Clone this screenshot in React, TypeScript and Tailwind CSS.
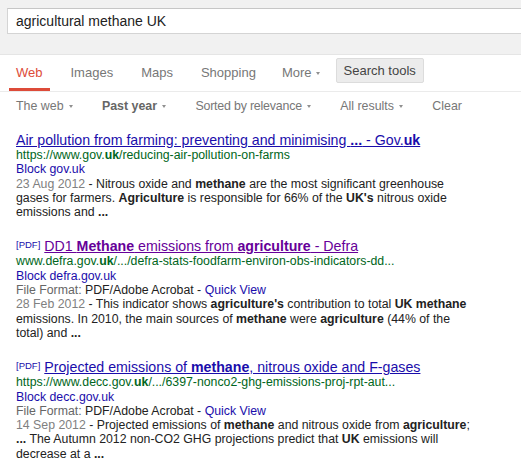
import React from "react";

const Arrow = ({ ml = "ml-[5px]" }: { ml?: string }) => (
  <span className={`${ml} inline-block h-0 w-0 border-l-[2.5px] border-r-[2.5px] border-t-[3px] border-l-transparent border-r-transparent border-t-[#909090] align-middle`} />
);

const B = ({ children }: { children: React.ReactNode }) => <b className="font-bold">{children}</b>;

type Result = {
  pdf?: boolean;
  visited?: boolean;
  title: React.ReactNode;
  url: React.ReactNode;
  block: string;
  format?: boolean;
  date: string;
  lines: React.ReactNode[];
};

const results: Result[] = [
  {
    title: (
      <>
        Air pollution from farming: preventing and minimising <B>...</B> - Gov.<B>uk</B>
      </>
    ),
    url: (
      <>
        https://www.gov.<B>uk</B>/reducing-air-pollution-on-farms
      </>
    ),
    block: "Block gov.uk",
    date: "23 Aug 2012",
    lines: [
      <>
        {" "}- Nitrous oxide and <B>methane</B> are the most significant greenhouse
      </>,
      <>
        gases for farmers. <B>Agriculture</B> is responsible for 66% of the <B>UK's</B> nitrous oxide
      </>,
      <>
        emissions and <B>...</B>
      </>,
    ],
  },
  {
    pdf: true,
    visited: true,
    title: (
      <>
        DD1 <B>Methane</B> emissions from <B>agriculture</B> - Defra
      </>
    ),
    url: (
      <>
        www.defra.gov.<B>uk</B>/.../defra-stats-foodfarm-environ-obs-indicators-dd...
      </>
    ),
    block: "Block defra.gov.uk",
    format: true,
    date: "28 Feb 2012",
    lines: [
      <>
        {" "}- This indicator shows <B>agriculture's</B> contribution to total <B>UK methane</B>
      </>,
      <>
        emissions. In 2010, the main sources of <B>methane</B> were <B>agriculture</B> (44% of the
      </>,
      <>
        total) and <B>...</B>
      </>,
    ],
  },
  {
    pdf: true,
    title: (
      <>
        Projected emissions of <B>methane</B>, nitrous oxide and F-gases
      </>
    ),
    url: (
      <>
        https://www.decc.gov.<B>uk</B>/.../6397-nonco2-ghg-emissions-proj-rpt-aut...
      </>
    ),
    block: "Block decc.gov.uk",
    format: true,
    date: "14 Sep 2012",
    lines: [
      <>
        {" "}- Projected emissions of <B>methane</B> and nitrous oxide from <B>agriculture</B>;
      </>,
      <>
        <B>...</B> The Autumn 2012 non-CO2 GHG projections predict that <B>UK</B> emissions will
      </>,
      <>
        decrease at a <B>...</B>
      </>,
    ],
  },
];

export default function App() {
  return (
    <div className="h-[471px] w-[521px] overflow-hidden bg-white font-['Liberation_Sans',Arial,sans-serif]">
      {/* header */}
      <div className="h-[55px] overflow-hidden border-b border-[#e5e5e5] bg-[#f1f1f1] pl-[7px] pt-[8px]">
        <div className="flex h-[26px] w-[600px] items-center border border-[#d4d4d4] border-t-[#c6c6c6] bg-white pl-[8px] text-[14px] text-[#222]">
          agricultural methane UK
        </div>
      </div>

      {/* tabs */}
      <div className="flex h-[37px] items-stretch gap-[14px] border-b border-[#ebebeb] pl-[9px] text-[13px] text-[#777]">
        <div className="flex h-[36px] items-center border-b-[3px] border-[#dd4b39] px-[7px] pt-[3px] text-[#dd4b39]">Web</div>
        <div className="flex h-[36px] items-center border-b-[3px] border-transparent px-[7px] pt-[3px]">Images</div>
        <div className="flex h-[36px] items-center border-b-[3px] border-transparent px-[7px] pt-[3px]">Maps</div>
        <div className="flex h-[36px] items-center border-b-[3px] border-transparent px-[7px] pt-[3px]">Shopping</div>
        <div className="-ml-[2px] flex h-[36px] items-center border-b-[3px] border-transparent pl-[7px] pr-0 pt-[3px]">
          More
          <Arrow ml="ml-[4px]" />
        </div>
        <div className="ml-[2px] flex items-start pt-[3px]">
          <div className="flex h-[25px] items-center rounded-[2px] border border-[#dcdcdc] bg-[#ececec] px-[7px] text-[#444]">
            Search tools
          </div>
        </div>
      </div>

      {/* filters */}
      <div className="flex h-[29px] items-center gap-[29.4px] pl-[16px] text-[12.4px] text-[#777]">
        <span className="flex items-center">
          The web
          <Arrow />
        </span>
        <span className="flex items-center font-bold text-[#666]">
          Past year
          <Arrow />
        </span>
        <span className="flex items-center tracking-[-0.2px]">
          Sorted by relevance
          <Arrow />
        </span>
        <span className="flex items-center">
          All results
          <Arrow />
        </span>
        <span>Clear</span>
      </div>

      {/* results */}
      <div className="flex flex-col gap-[19px] pl-[16px] pt-[11px]">
        {results.map((r, i) => (
          <div key={i} className="flex flex-col">
            <div className="whitespace-nowrap text-[14.2px] leading-[16px]">
              {r.pdf && (
                <span className="mr-[4px] inline-block align-top text-[9.5px] leading-[13px] text-[#1a0dab]">[PDF]</span>
              )}
              <span className={`underline ${r.visited ? "text-[#660099]" : "text-[#1a0dab]"}`}>{r.title}</span>
            </div>
            <div className="whitespace-nowrap text-[12.3px] leading-[14.3px]">
              <div className="text-[#006621]">{r.url}</div>
              <div className="text-[#1a0dab]">{r.block}</div>
              {r.format && (
                <div className="text-[#222]">
                  <span className="text-[#666]">File Format: </span>PDF/Adobe Acrobat - <span className="text-[#1a0dab]">Quick View</span>
                </div>
              )}
              <div className="text-[#222]">
                <span className="text-[#808080]">{r.date}</span>
                {r.lines[0]}
              </div>
              <div className="text-[#222]">{r.lines[1]}</div>
              <div className="text-[#222]">{r.lines[2]}</div>
            </div>
          </div>
        ))}
      </div>
    </div>
  );
}
